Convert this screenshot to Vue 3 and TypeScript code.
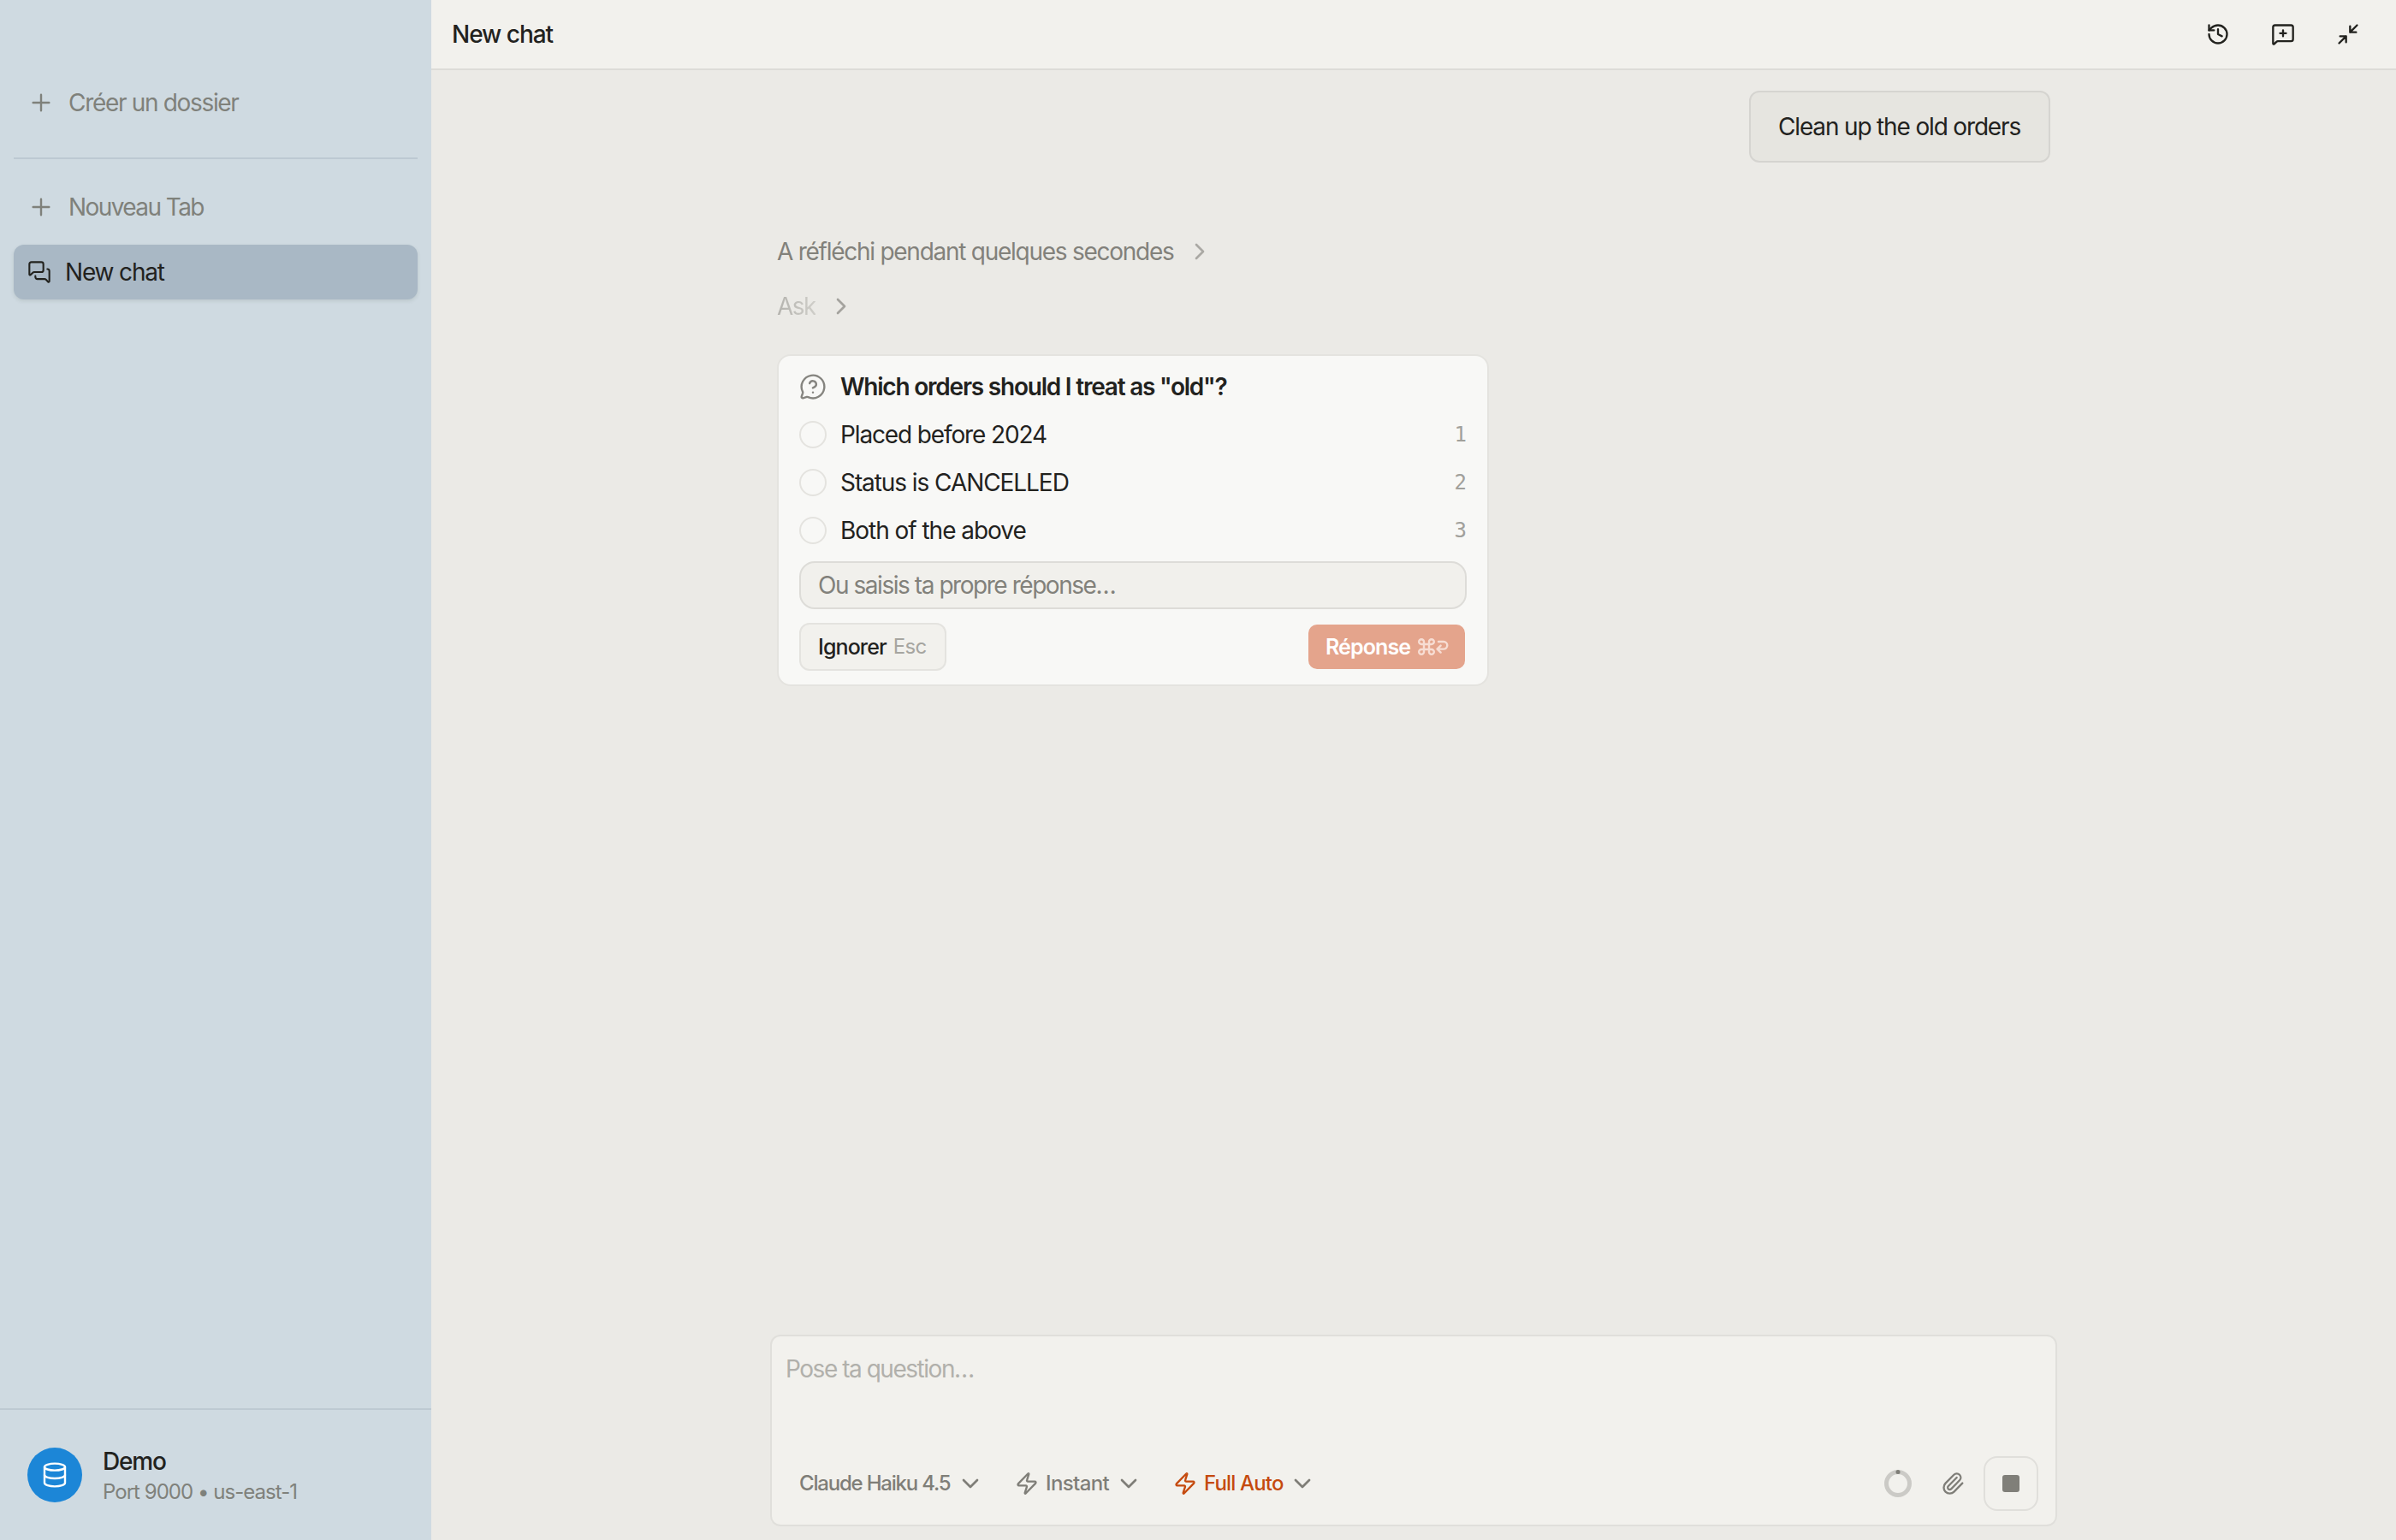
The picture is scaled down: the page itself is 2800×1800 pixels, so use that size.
<script setup lang="ts">
interface Choice {
  key: number
  label: string
  spacing: 'placed' | 'status' | 'both'
}

const choices: Choice[] = [
  { key: 1, label: 'Placed before 2024', spacing: 'placed' },
  { key: 2, label: 'Status is CANCELLED', spacing: 'status' },
  { key: 3, label: 'Both of the above', spacing: 'both' },
]
</script>

<template>
  <div class="app">
    <aside class="sidebar">
      <nav class="nav">
        <a class="row action">
          <svg class="icon i32 mid" viewBox="0 0 24 24"><path d="M5 12h14M12 5v14" /></svg>
          <span class="label-folder">Créer un dossier</span>
        </a>
        <div class="divider"></div>
        <a class="row action">
          <svg class="icon i32 mid" viewBox="0 0 24 24"><path d="M5 12h14M12 5v14" /></svg>
          <span class="label-tab">Nouveau Tab</span>
        </a>
        <a class="row active">
          <svg class="icon i28 mid" viewBox="0 0 24 24">
            <path d="M16 10a2 2 0 0 1-2 2H6.828a2 2 0 0 0-1.414.586l-2.202 2.202A.71.71 0 0 1 2 14.286V4a2 2 0 0 1 2-2h10a2 2 0 0 1 2 2z" />
            <path d="M20 9a2 2 0 0 1 2 2v10.286a.71.71 0 0 1-1.212.502l-2.202-2.202A2 2 0 0 0 17.172 19H10a2 2 0 0 1-2-2v-1" />
          </svg>
          <span class="label-chat">New chat</span>
        </a>
      </nav>
      <footer class="account">
        <div class="avatar">
          <svg class="icon i32 mid" viewBox="0 0 24 24">
            <ellipse cx="12" cy="5" rx="9" ry="3" />
            <path d="M3 5v14a9 3 0 0 0 18 0V5" />
            <path d="M3 12a9 3 0 0 0 18 0" />
          </svg>
        </div>
        <div class="account-text">
          <div class="account-name">Demo</div>
          <div class="account-meta">Port 9000 • us-east-1</div>
        </div>
      </footer>
    </aside>

    <main class="main">
      <header class="topbar">
        <h1 class="title">New chat</h1>
        <div class="tools">
          <svg class="icon i28" viewBox="0 0 24 24">
            <path d="M3 12a9 9 0 1 0 9-9 9.75 9.75 0 0 0-6.74 2.74L3 8" />
            <path d="M3 3v5h5" />
            <path d="M12 7v5l4 2" />
          </svg>
          <svg class="icon i28" viewBox="0 0 24 24">
            <path d="M22 17a2 2 0 0 1-2 2H6.828a2 2 0 0 0-1.414.586l-2.202 2.202A.71.71 0 0 1 2 21.286V5a2 2 0 0 1 2-2h16a2 2 0 0 1 2 2z" />
            <path d="M12 8v6M9 11h6" />
          </svg>
          <svg class="icon i28" viewBox="0 0 24 24">
            <path d="m14 10 7-7M20 10h-6V4M3 21l7-7M4 14h6v6" />
          </svg>
        </div>
      </header>

      <section class="thread">
        <div class="bubble">Clean up the old orders</div>

        <div class="step thought">
          <span>A réfléchi pendant quelques secondes</span>
          <svg class="icon i32" viewBox="0 0 24 24"><path d="m9 18 6-6-6-6" /></svg>
        </div>
        <div class="step ask">
          <span>Ask</span>
          <svg class="icon i32" viewBox="0 0 24 24"><path d="m9 18 6-6-6-6" /></svg>
        </div>

        <div class="card">
          <div class="question">
            <svg class="icon i32 mid" viewBox="0 0 24 24">
              <path d="M2.992 16.342a2 2 0 0 1 .094 1.167l-1.065 3.29a1 1 0 0 0 1.236 1.168l3.413-.998a2 2 0 0 1 1.099.092 10 10 0 1 0-4.777-4.719" />
              <path d="M9.09 9a3 3 0 0 1 5.83 1c0 2-3 3-3 3" />
              <path d="M12 17h.01" />
            </svg>
            <span>Which orders should I treat as "old"?</span>
          </div>
          <div v-for="c in choices" :key="c.key" class="choice">
            <span class="radio"></span>
            <span :class="['choice-label', c.spacing]">{{ c.label }}</span>
            <span class="choice-key">{{ c.key }}</span>
          </div>
          <div class="field">Ou saisis ta propre réponse…</div>
          <div class="buttons">
            <button class="skip" type="button">
              <span>Ignorer</span>
              <span class="esc">Esc</span>
            </button>
            <button class="answer" type="button">
              <span>Réponse</span>
              <svg class="keys" viewBox="0 0 36 20" width="36" height="20">
                <path d="M7 13V4.2A2.9 2.9 0 1 0 4.2 7h11.6A2.9 2.9 0 1 0 13 4.2v11.6A2.9 2.9 0 1 0 15.8 13H4.2A2.9 2.9 0 1 0 7 15.8z" />
                <path d="M24 4h6a4.3 4.3 0 0 1 0 8.6h-7.5M26.6 8.6l-4.1 4 4.1 4" />
              </svg>
            </button>
          </div>
        </div>
      </section>

      <section class="composer">
        <div class="placeholder">Pose ta question…</div>
        <div class="controls">
          <div class="select model">
            <span>Claude Haiku 4.5</span>
            <svg class="icon i32 chevron" viewBox="0 0 24 24"><path d="m6 9 6 6 6-6" /></svg>
          </div>
          <div class="select effort">
            <svg class="icon i28" viewBox="0 0 24 24">
              <path d="M4 14a1 1 0 0 1-.78-1.63l9.9-10.2a.5.5 0 0 1 .86.46l-1.92 6.02A1 1 0 0 0 13 10h7a1 1 0 0 1 .78 1.63l-9.9 10.2a.5.5 0 0 1-.86-.46l1.92-6.02A1 1 0 0 0 11 14z" />
            </svg>
            <span>Instant</span>
            <svg class="icon i32 chevron" viewBox="0 0 24 24"><path d="m6 9 6 6 6-6" /></svg>
          </div>
          <div class="select mode">
            <svg class="icon i28" viewBox="0 0 24 24">
              <path d="M4 14a1 1 0 0 1-.78-1.63l9.9-10.2a.5.5 0 0 1 .86.46l-1.92 6.02A1 1 0 0 0 13 10h7a1 1 0 0 1 .78 1.63l-9.9 10.2a.5.5 0 0 1-.86-.46l1.92-6.02A1 1 0 0 0 11 14z" />
            </svg>
            <span>Full Auto</span>
            <svg class="icon i32 chevron" viewBox="0 0 24 24"><path d="m6 9 6 6 6-6" /></svg>
          </div>
          <svg class="usage" viewBox="0 0 32 32" width="32" height="32">
            <circle cx="16" cy="16" r="13.5" fill="none" stroke="#cbcac6" stroke-width="5" />
            <circle cx="16" cy="2.5" r="2.5" fill="#7f7e78" />
          </svg>
          <svg class="icon i28 clip" viewBox="0 0 24 24">
            <path d="m16 6-8.414 8.586a2 2 0 0 0 2.829 2.829l8.414-8.586a4 4 0 1 0-5.657-5.657l-8.379 8.551a6 6 0 1 0 8.485 8.485l8.379-8.551" />
          </svg>
          <button class="stop" type="button"><span></span></button>
        </div>
      </section>
    </main>
  </div>
</template>

<style>
body {
  margin: 0;
}
</style>

<style scoped>
.app {
  display: flex;
  width: 100%;
  height: 100vh;
  overflow: hidden;
  background: #ebeae6;
  color: #22221e;
  font-family: Inter, "Liberation Sans", sans-serif;
  font-size: 28px;
  font-weight: 430;
  line-height: 40px;
  white-space: nowrap;
}
.app * {
  box-sizing: border-box;
}
button {
  margin: 0;
  font-family: inherit;
  color: inherit;
}
.icon {
  display: block;
  flex: none;
  fill: none;
  stroke: currentColor;
  stroke-width: 2;
  stroke-linecap: round;
  stroke-linejoin: round;
}
.i32 {
  width: 32px;
  height: 32px;
}
.i28 {
  width: 28px;
  height: 28px;
}
.mid {
  stroke-width: 1.8;
}

/* Sidebar */
.sidebar {
  display: flex;
  flex: none;
  flex-direction: column;
  justify-content: space-between;
  width: 504px;
  background: #cfdae1;
}
.nav {
  padding: 88px 16px 0;
}
.row {
  display: flex;
  align-items: center;
  height: 64px;
  padding-left: 16px;
  border-radius: 12px;
}
.action {
  gap: 16px;
  color: #7f817b;
}
.divider {
  height: 2px;
  margin: 32px 0 24px;
  background: #bdc9d2;
}
.active {
  gap: 16px;
  margin-top: 12px;
  background: #a9b8c5;
  box-shadow: 0 2px 4px rgba(60, 70, 60, 0.12);
}
.label-folder {
  letter-spacing: -1.32px;
}
.label-tab {
  letter-spacing: -1.58px;
}
.label-chat {
  letter-spacing: -1.16px;
}
.account {
  display: flex;
  align-items: center;
  gap: 24px;
  height: 154px;
  padding-left: 32px;
  border-top: 2px solid #bdc9d2;
}
.avatar {
  display: flex;
  align-items: center;
  justify-content: center;
  width: 64px;
  height: 64px;
  border-radius: 50%;
  background: #1c86d7;
  color: #fff;
}
.account-name {
  font-weight: 550;
  letter-spacing: -1.15px;
}
.account-meta {
  font-size: 24px;
  line-height: 32px;
  letter-spacing: -0.97px;
  color: #7f817b;
}

/* Main column */
.main {
  display: flex;
  flex: 1;
  flex-direction: column;
  align-items: center;
}
.topbar {
  display: flex;
  align-items: center;
  justify-content: space-between;
  align-self: stretch;
  height: 82px;
  padding: 0 42px 0 24px;
  border-bottom: 2px solid #dddcd8;
  background: #f2f1ed;
}
.title {
  margin: 0;
  font-size: 28px;
  font-weight: 550;
  letter-spacing: -1.02px;
}
.tools {
  display: flex;
  gap: 48px;
}
.thread {
  display: flex;
  flex: 1;
  flex-direction: column;
  align-items: flex-start;
  width: 1488px;
  padding-top: 24px;
}
.bubble {
  align-self: flex-end;
  width: 352px;
  padding: 20px 0 20px 32px;
  border: 2px solid #d5d4d0;
  border-radius: 12px;
  background: #e6e5e0;
  letter-spacing: -1.16px;
}
.step {
  display: flex;
  align-items: center;
  gap: 14px;
  height: 40px;
}
.thought {
  margin-top: 84px;
  letter-spacing: -1.26px;
  color: #82817b;
}
.thought .icon {
  color: #aaa9a4;
}
.ask {
  margin-top: 24px;
  letter-spacing: -1.55px;
}
.ask span {
  background: linear-gradient(90deg, #b4b3ae, #cfcec9);
  background-clip: text;
  color: transparent;
}
.ask .icon {
  color: #a4a39e;
}

/* Question card */
.card {
  width: 832px;
  margin-top: 36px;
  padding: 8px 24px 16px;
  border: 2px solid #e4e3df;
  border-radius: 16px;
  background: #f8f8f6;
}
.question {
  display: flex;
  align-items: center;
  gap: 16px;
  height: 56px;
  font-weight: 570;
  letter-spacing: -1.22px;
}
.question .icon {
  color: #85847f;
}
.choice {
  display: flex;
  align-items: center;
  height: 56px;
}
.radio {
  width: 32px;
  height: 32px;
  margin-right: 16px;
  border: 2px solid #e4e3df;
  border-radius: 50%;
}
.placed {
  letter-spacing: -1.13px;
}
.status {
  letter-spacing: -1.07px;
}
.both {
  letter-spacing: -1.03px;
}
.choice-key {
  margin-left: auto;
  font-family: "DejaVu Sans Mono", monospace;
  font-size: 24px;
  font-weight: 400;
  color: #a1a09b;
}
.field {
  height: 56px;
  margin-top: 8px;
  padding: 6px 20px;
  border: 2px solid #dddcd8;
  border-radius: 18px;
  background: #f1f0ec;
  letter-spacing: -1.45px;
  color: #82817b;
}
.buttons {
  display: flex;
  align-items: center;
  justify-content: space-between;
  margin-top: 16px;
}
.skip,
.answer {
  display: flex;
  align-items: center;
  font-size: 25px;
  line-height: 40px;
}
.skip {
  gap: 8px;
  width: 172px;
  height: 56px;
  padding: 0 0 0 20px;
  border: 2px solid #e4e3df;
  border-radius: 12px;
  background: #f2f1ed;
  font-weight: 540;
  letter-spacing: -0.9px;
}
.esc {
  font-size: 24px;
  font-weight: 430;
  letter-spacing: -0.7px;
  color: #a6a5a0;
}
.answer {
  gap: 9px;
  width: 183px;
  height: 52px;
  margin-right: 2px;
  padding: 0 0 0 20px;
  border: 0;
  border-radius: 10px;
  background: #e4a48c;
  font-weight: 600;
  letter-spacing: -0.88px;
  color: #fff;
}
.keys {
  fill: none;
  stroke: #f7ddd3;
  stroke-width: 2.4;
  stroke-linecap: round;
  stroke-linejoin: round;
}

/* Composer */
.composer {
  display: flex;
  flex-direction: column;
  justify-content: space-between;
  width: 1504px;
  height: 224px;
  margin-bottom: 16px;
  padding: 18px 20px 16px 16px;
  border: 2px solid #e0dfdb;
  border-radius: 12px;
  background: #f2f1ed;
}
.placeholder {
  letter-spacing: -1.47px;
  color: #b1b0ab;
}
.controls {
  display: flex;
  align-items: center;
  height: 64px;
  padding-left: 16px;
  font-size: 24px;
  font-weight: 450;
  color: #7f7e78;
}
.select {
  display: flex;
  align-items: center;
}
.chevron {
  margin-left: auto;
}
.model {
  width: 216px;
  letter-spacing: -1.2px;
}
.effort {
  width: 149px;
  margin-left: 36px;
  letter-spacing: -0.62px;
}
.mode {
  width: 167px;
  margin-left: 36px;
  letter-spacing: -0.84px;
}
.effort span,
.mode span {
  margin-left: 8px;
}
.mode {
  color: #c54a0e;
}
.mode .chevron {
  color: #7f7e78;
}
.usage {
  display: block;
  margin-left: auto;
}
.clip {
  margin: 0 22px 0 34px;
}
.stop {
  display: flex;
  align-items: center;
  justify-content: center;
  width: 64px;
  height: 64px;
  padding: 0;
  border: 2px solid #e0dfdb;
  border-radius: 16px;
  background: transparent;
}
.stop span {
  width: 20px;
  height: 20px;
  border-radius: 3px;
  background: #807f79;
}
</style>
